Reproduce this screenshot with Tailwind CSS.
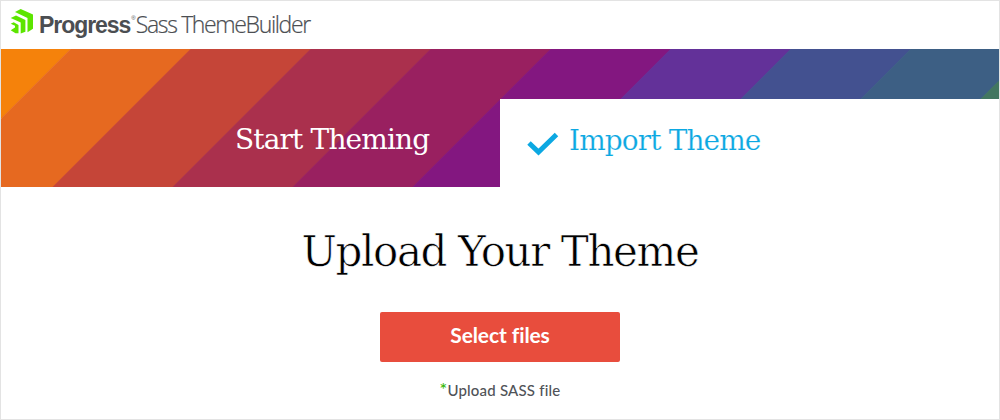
<!DOCTYPE html>
<html lang="en">
<head>
<meta charset="utf-8">
<title>Progress Sass ThemeBuilder</title>
<script src="https://cdn.jsdelivr.net/npm/@tailwindcss/browser@4"></script>
</head>
<body class="bg-white">
<div class="flex h-[420px] w-[1000px] flex-col overflow-hidden border border-[#e3e3e3] bg-white">
  <header class="flex h-12 shrink-0 items-start whitespace-nowrap pl-[9px] text-[#4b4e52]">
    <svg class="mt-[7px] h-[26px] w-6 shrink-0" viewBox="0 0 24 26" fill="#5ce500"><path d="M10.700 1 23 6.500v14.200l-5.500 3.500V9.900L5 3.900zM6 7.500l9.400 4.600v11.700l-4.700 1.700V14.600L.7 9.900zM.7 22.300 5 19.500v-1.800L.7 15.800l3-1.500L8.500 17v8.200h-3z"/></svg>
    <span class="ml-[5px] mt-[10px] font-['Liberation_Sans'] text-[23px] font-bold leading-7 tracking-[-1.05px]">Progress</span>
    <span class="ml-px mt-[13px] text-[6px] leading-[8px] font-['Liberation_Sans']">®</span>
    <span class="mt-[9px] font-['Open_Sans'] text-[23px] font-light leading-7 tracking-[-1.35px] [-webkit-text-stroke:0.2px_#4b4e52]">Sass ThemeBuilder</span>
  </header>
  <nav class="grid h-[138px] shrink-0 grid-cols-[499px_499px] grid-rows-1 overflow-hidden whitespace-nowrap">
    <svg class="col-start-1 col-end-3 row-start-1 h-[138px] w-[998px]" viewBox="1 49 998 138">
      <path fill="#f5820b" d="M0 49h71L-67 187z"/>
      <path fill="#e66920" d="M70.500 49h121L53.500 187h-121z"/>
      <path fill="#c54538" d="M190.500 49h121L173.500 187h-121z"/>
      <path fill="#aa304d" d="M310.500 49h121L293.500 187h-121z"/>
      <path fill="#992060" d="M430.500 49h121L413.500 187h-121z"/>
      <path fill="#831780" d="M550.500 49h121L533.500 187h-121z"/>
      <path fill="#633199" d="M670.500 49h121L653.500 187h-121z"/>
      <path fill="#435190" d="M790.500 49h121L773.500 187h-121z"/>
      <path fill="#3d5f84" d="M910.500 49h121L893.500 187h-121z"/>
      <path fill="#427660" d="M1030.500 49h121L1013.500 187h-121z"/>
    </svg>
    <a class="z-10 col-start-1 row-start-1 pl-[234px] pt-[71px] font-['DejaVu_Serif'] text-[28px] leading-10 tracking-[-0.85px] text-white">Start Theming</a>
    <a class="z-10 col-start-2 row-start-1 mt-[50px] flex bg-white pl-[27px] text-[#0ca8e2]">
      <svg class="mt-[33px] h-6 w-8 shrink-0" viewBox="0 0 32 24" fill="none" stroke="#0ca8e2" stroke-width="5"><path d="M2 11 11.500 20 29.500 2.500"/></svg>
      <span class="ml-[10px] mt-[22px] font-['DejaVu_Serif'] text-[28px] leading-10 tracking-[-0.9px] [-webkit-text-stroke:0.2px_white]">Import Theme</span>
    </a>
  </nav>
  <main class="flex flex-col items-center whitespace-nowrap">
    <h1 class="mt-[35px] font-['DejaVu_Serif'] text-[42px] leading-[60px] tracking-[-1.4px] text-black [-webkit-text-stroke:0.6px_white]">Upload Your Theme</h1>
    <button class="mt-[30px] h-[50px] w-60 rounded-[2px] bg-[#e84d3d] pb-[4px] font-['Lato'] text-[21px] font-bold tracking-[-0.1px] text-white">Select files</button>
    <p class="mt-[17px] font-['Lato'] text-[15px] font-medium leading-[22px] tracking-[0.2px] text-[#505358]"><span class="text-[18px] leading-none text-[#35b800]">*</span>Upload SASS file</p>
  </main>
</div>
</body>
</html>
